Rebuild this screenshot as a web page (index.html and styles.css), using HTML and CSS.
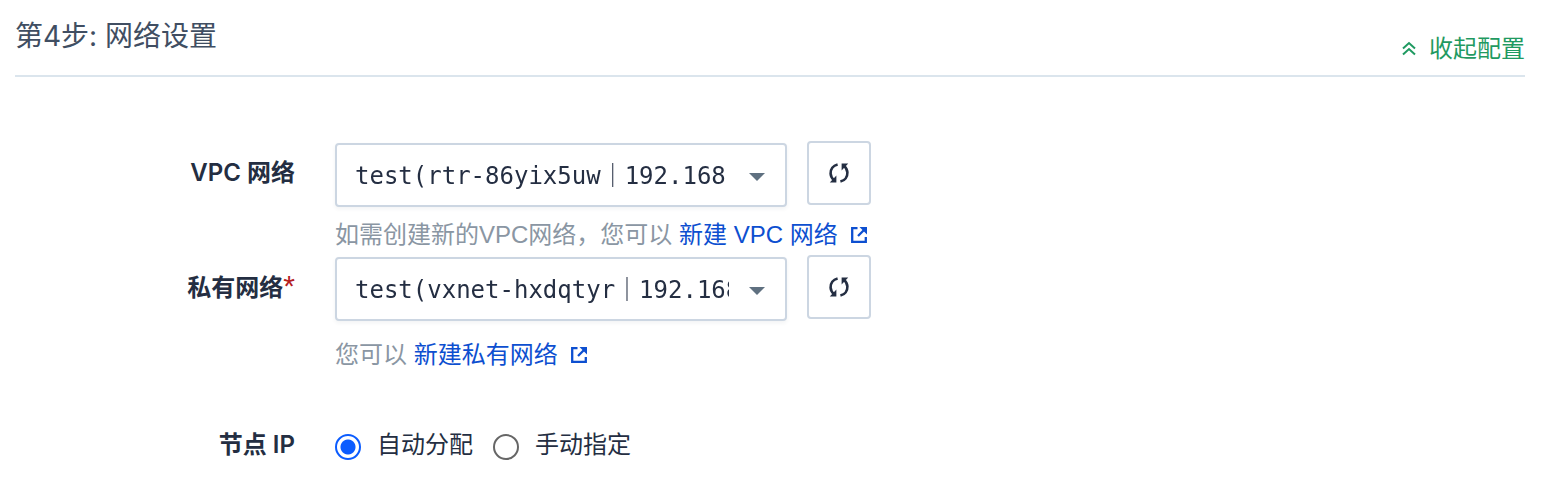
FILE: index.html
```html
<!DOCTYPE html>
<html lang="zh-CN">
<head>
<meta charset="utf-8">
<title>网络设置</title>
<link rel="stylesheet" href="styles.css">
</head>
<body>
<svg class="sprite" aria-hidden="true">
  <symbol id="refresh" viewBox="0 0 24 24">
    <path d="M10.600 3.400C6 4.600 3.400 8.400 3.600 12.600C3.800 15.400 5 17.400 7 19.200" fill="none" stroke="currentColor" stroke-width="2.600"/>
    <path d="M2.800 21.400H9.400V14.600z" fill="currentColor"/>
    <path d="M13.400 20.600C18 19.400 20.600 15.600 20.400 11.400C20.200 8.600 19 6.600 17 4.800" fill="none" stroke="currentColor" stroke-width="2.600"/>
    <path d="M21.200 2.600H14.600V9.400z" fill="currentColor"/>
  </symbol>
  <symbol id="external" viewBox="0 0 18 18">
    <path d="M7.500 2.200H2.200V15.800H15.800V11" fill="none" stroke="currentColor" stroke-width="2.300"/>
    <path d="M8 10L14 4" fill="none" stroke="currentColor" stroke-width="2.300"/>
    <path d="M9.500 1H17V8.500z" fill="currentColor"/>
  </symbol>
</svg>
<main class="step">
  <header class="step-header">
    <h2 class="step-title">第4步: 网络设置</h2>
    <button class="collapse" type="button">
      <svg class="collapse-icon" viewBox="0 0 16 16" aria-hidden="true"><path d="M2 7.500L8 2L14 7.500M2 13.500L8 8L14 13.500" fill="none" stroke="currentColor" stroke-width="2"/></svg>
      收起配置
    </button>
  </header>
  <form class="form">
    <div class="row">
      <label class="label" for="vpc">VPC 网络</label>
      <div class="field">
        <div class="controls">
          <div class="select-wrap">
            <select class="select" id="vpc"><option>test(rtr-86yix5uw&#xFF5C;192.168.0.0/16)</option></select>
            <svg class="caret" viewBox="0 0 16 8" aria-hidden="true"><path d="M0 0H16L8 8z" fill="currentColor"/></svg>
          </div>
          <button class="refresh" type="button" aria-label="刷新"><svg class="refresh-icon" aria-hidden="true"><use href="#refresh"/></svg></button>
        </div>
        <p class="help">如需创建新的VPC网络，您可以 <a class="link" href="#">新建 VPC 网络<svg class="link-icon" aria-hidden="true"><use href="#external"/></svg></a></p>
      </div>
    </div>
    <div class="row">
      <label class="label" for="vxnet">私有网络<span class="required">*</span></label>
      <div class="field">
        <div class="controls">
          <div class="select-wrap">
            <select class="select" id="vxnet"><option>test(vxnet-hxdqtyr&#xFF5C;192.168.0.0/24)</option></select>
            <svg class="caret" viewBox="0 0 16 8" aria-hidden="true"><path d="M0 0H16L8 8z" fill="currentColor"/></svg>
          </div>
          <button class="refresh" type="button" aria-label="刷新"><svg class="refresh-icon" aria-hidden="true"><use href="#refresh"/></svg></button>
        </div>
        <p class="help help-spaced">您可以 <a class="link" href="#">新建私有网络<svg class="link-icon" aria-hidden="true"><use href="#external"/></svg></a></p>
      </div>
    </div>
    <div class="row row-ip" role="radiogroup" aria-labelledby="ip-label">
      <span class="label label-inline" id="ip-label">节点 IP</span>
      <div class="radios">
        <label class="radio-label"><input class="radio" type="radio" name="ip" checked>自动分配</label>
        <label class="radio-label"><input class="radio" type="radio" name="ip">手动指定</label>
      </div>
    </div>
  </form>
</main>
</body>
</html>
```
FILE: styles.css
```css
* {
  box-sizing: border-box;
}

body {
  margin: 0;
  background: #fff;
  color: #242e42;
  font: 24px/32px "Liberation Sans", "Noto Sans CJK SC", sans-serif;
}

button {
  font: inherit;
  cursor: pointer;
}

.sprite {
  display: none;
}

.step {
  padding: 0 17px 24px 15px;
}

.step-header {
  display: flex;
  justify-content: space-between;
  align-items: flex-end;
  padding: 16px 0 10px;
  border-bottom: 2px solid #dbe5ed;
}

.step-title {
  margin: 0 0 9px;
  color: #404e62;
  font-family: Inter, "Noto Sans CJK SC", sans-serif;
  font-size: 28px;
  font-weight: 400;
  line-height: 40px;
}

.collapse {
  display: flex;
  align-items: center;
  gap: 12px;
  padding: 0;
  border: 0;
  background: none;
  color: #1f9a61;
}

.collapse-icon {
  width: 16px;
  height: 16px;
}

.form {
  display: flex;
  flex-direction: column;
  gap: 4px;
  padding-top: 64px;
}

.row {
  display: grid;
  grid-template-columns: 280px 1fr;
  gap: 40px;
}

.row-ip {
  margin-top: 54px;
}

.label {
  padding-top: 16px;
  font-family: Inter, "Noto Sans CJK SC", sans-serif;
  font-weight: 600;
  text-align: right;
}

.label-inline {
  padding-top: 0;
}

.required {
  color: #b5201f;
  font-family: "Liberation Sans", sans-serif;
  font-size: 30px;
  font-weight: 400;
  line-height: 1;
}

.controls {
  display: flex;
  align-items: flex-start;
  gap: 20px;
}

.select-wrap {
  position: relative;
  width: 452px;
  margin-top: 2px;
}

.select {
  display: block;
  width: 100%;
  height: 64px;
  padding: 2px 56px 0 18px;
  appearance: none;
  border: 2px solid #ccd6e2;
  border-radius: 4px;
  background: #fff;
  box-shadow: 0 2px 4px rgba(36, 46, 66, 0.06);
  color: #242e42;
  font: 24px/32px "DejaVu Sans Mono", "Noto Sans CJK SC", monospace;
  will-change: opacity;
}

.caret {
  position: absolute;
  top: 30px;
  right: 22px;
  width: 16px;
  height: 8px;
  color: #5f7080;
  pointer-events: none;
}

.refresh {
  display: flex;
  align-items: center;
  justify-content: center;
  width: 64px;
  height: 64px;
  padding: 0;
  border: 2px solid #ccd6e2;
  border-radius: 4px;
  background: #fff;
  color: #242e42;
}

.refresh-icon {
  width: 24px;
  height: 24px;
}

.help {
  margin: 12px 0 0;
  color: #8a96a3;
}

.help-spaced {
  margin-top: 18px;
}

.link {
  color: #0d4fd0;
  text-decoration: none;
}

.link-icon {
  width: 18px;
  height: 18px;
  margin-left: 12px;
  vertical-align: -1px;
}

.radios {
  display: flex;
  gap: 20px;
}

.radio-label {
  display: flex;
  align-items: center;
  gap: 16px;
}

.radio {
  width: 26px;
  height: 26px;
  margin: 4px 0 0;
  appearance: none;
  border: 2px solid #666;
  border-radius: 50%;
  background: #fff;
}

.radio:checked {
  border-color: #0b5cff;
  background: radial-gradient(circle, #0b5cff 7px, #fff 8px);
}
```
